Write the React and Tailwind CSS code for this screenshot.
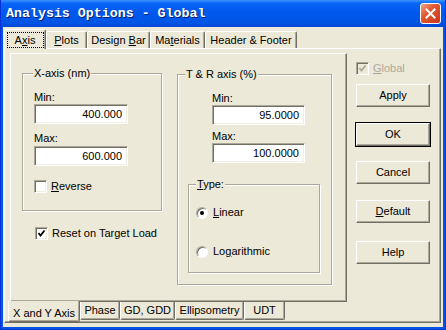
import React from "react";

const font = { fontFamily: '"Liberation Sans", Arial, sans-serif' };

const sunken =
  "border border-t-[#aca899] border-l-[#aca899] border-r-white border-b-white shadow-[inset_1px_1px_0_#716f64,inset_-1px_-1px_0_#f1efe2]";
const raised =
  "border border-t-white border-l-white border-r-[#716f64] border-b-[#716f64] shadow-[inset_-1px_-1px_0_#aca899]";
const etched =
  "border border-[#aca899] shadow-[1px_1px_0_white,inset_1px_1px_0_white]";

function U({ children }) {
  return <span className="underline underline-offset-[1px]">{children}</span>;
}

function Check({ checked, disabled }) {
  return (
    <div
      className={`w-[13px] h-[13px] flex items-center justify-center ${sunken} ${
        disabled ? "bg-[#ece9d8]" : "bg-white"
      }`}
    >
      {checked && (
        <svg width="9" height="9" viewBox="0 0 9 9">
          <path
            d="M1.5 4 L3.5 6.5 L7.5 1.5"
            fill="none"
            stroke={disabled ? "#aca899" : "#000"}
            strokeWidth="1.8"
          />
        </svg>
      )}
    </div>
  );
}

function Radio({ on }) {
  return (
    <div className="w-[12px] h-[12px] rounded-full bg-white border border-t-[#aca899] border-l-[#aca899] border-r-white border-b-white shadow-[inset_1px_1px_0_#716f64] flex items-center justify-center">
      {on && <div className="w-[4px] h-[4px] rounded-full bg-black" />}
    </div>
  );
}

function Field({ value, w }) {
  return (
    <div
      className={`${sunken} bg-white h-[20px] flex items-center justify-end pr-[5px] text-[11px] text-black`}
      style={{ width: w }}
    >
      {value}
    </div>
  );
}

function Btn({ children, def, className = "" }) {
  return (
    <div
      className={`w-[74px] h-[23px] ${
        def ? "outline outline-1 outline-black" : ""
      } ${className}`}
    >
      <div
        className={`w-full h-full ${raised} flex items-center justify-center text-[11px] text-black`}
      >
        {children}
      </div>
    </div>
  );
}

function Group({ label, left, className, children }) {
  return (
    <div className={`relative ${etched} ${className}`}>
      <div
        className="absolute -top-[7px] bg-[#ece9d8] px-[1px] leading-[13px] text-[11px] text-black"
        style={{ left }}
      >
        {label}
      </div>
      {children}
    </div>
  );
}

const topTab =
  "h-[17px] border-t border-l border-white border-r border-r-[#716f64] rounded-t-[2px] shadow-[inset_-1px_0_0_#aca899] flex items-center justify-center text-[11px]";
const bottomTab =
  "h-[18px] border-l border-white border-r border-r-[#716f64] border-b border-b-[#716f64] rounded-b-[2px] shadow-[inset_-1px_-1px_0_#aca899] flex items-center justify-center";

export default function App() {
  return (
    <div
      className="w-[446px] h-[330px] bg-[#0055e5] flex flex-col border-x border-b border-[#0831d9]"
      style={font}
    >
      {/* title bar */}
      <div className="h-[27px] shrink-0 flex items-center justify-between pl-[5px] pr-[4px] bg-[linear-gradient(to_bottom,#3d95ff_0%,#0a66f5_12%,#0058ee_45%,#0055e5_85%,#0046d3_100%)]">
        <div
          className="text-white font-bold text-[13.3px] [text-shadow:1px_1px_0_#0a1e6e] whitespace-pre"
          style={{ fontFamily: '"Liberation Mono", "Courier New", monospace' }}
        >
          Analysis Options - Global
        </div>
        <div className="w-[21px] h-[21px] rounded-[3px] border border-white bg-[linear-gradient(135deg,#f0a58a_0%,#e2582f_40%,#c7361a_100%)] flex items-center justify-center">
          <svg width="11" height="11" viewBox="0 0 11 11">
            <path d="M1.5 1.5 L9.5 9.5 M9.5 1.5 L1.5 9.5" stroke="#fff" strokeWidth="2" strokeLinecap="square" />
          </svg>
        </div>
      </div>

      {/* client area */}
      <div className="flex-1 mx-[2px] mb-[2px] bg-[#ece9d8] flex flex-col pl-[1px] pr-[2px] pb-[4px] text-black">
        {/* top tabs */}
        <div className="h-[21px] shrink-0 flex items-end">
          <div className="relative z-10 w-[42px] h-[20px] -mb-px bg-[#ece9d8] border-t border-l border-white border-r border-r-[#716f64] rounded-t-[2px] shadow-[inset_-1px_0_0_#aca899] flex items-start justify-center pt-[2px]">
            <div className="border border-dotted border-black w-[37px] h-[16px] flex items-center justify-center leading-[13px] text-[11px]">
              A<U>x</U>is
            </div>
          </div>
          <div className={`w-[41px] ${topTab}`}>
            <U>P</U>lots
          </div>
          <div className={`w-[63px] ${topTab}`}>
            Design&nbsp;<U>B</U>ar
          </div>
          <div className={`w-[55px] ${topTab}`}>
            Ma<U>t</U>erials
          </div>
          <div className={`w-[92px] ${topTab}`}>Header &amp; Footer</div>
        </div>

        {/* top tab page */}
        <div className={`flex-1 ${raised} flex`}>
          {/* inner tab control */}
          <div className="ml-[5px] mt-[4px] flex flex-col">
            <div className={`relative w-[337px] h-[249px] ${raised} flex items-start`}>
              {/* X axis column */}
              <div className="ml-[11px] mt-[19px] flex flex-col">
                <Group label="X-axis (nm)" left={10} className="w-[140px] h-[138px]">
                  <div className="pl-[11px] pt-[17px] flex flex-col text-[11px]">
                    <div className="leading-[13px]">Min:</div>
                    <Field value="400.000" w={94} />
                    <div className="leading-[13px] mt-[8px]">Max:</div>
                    <div className="mt-[1px]">
                      <Field value="600.000" w={94} />
                    </div>
                    <div className="mt-[14px] flex items-center gap-[4px] leading-[13px]">
                      <Check />
                      <span>
                        <U>R</U>everse
                      </span>
                    </div>
                  </div>
                </Group>
                <div className="mt-[16px] pl-[13px] flex items-center gap-[4px] text-[11px] leading-[13px]">
                  <Check checked />
                  <span>Reset on Target Load</span>
                </div>
              </div>

              {/* T & R column */}
              <Group label="T & R axis (%)" left={7} className="ml-[15px] mt-[20px] w-[155px] h-[211px]">
                <div className="pl-[34px] pt-[17px] flex flex-col text-[11px]">
                  <div className="leading-[13px]">Min:</div>
                  <Field value="95.0000" w={93} />
                  <div className="leading-[13px] mt-[5px]">Max:</div>
                  <Field value="100.0000" w={93} />
                </div>
                <Group
                  label={
                    <>
                      <U>T</U>ype:
                    </>
                  }
                  left={7}
                  className="ml-[10px] mt-[21px] w-[132px] h-[89px]"
                >
                  <div className="pl-[7px] pt-[21px] flex flex-col gap-[26px] text-[11px] leading-[13px]">
                    <div className="flex items-center gap-[5px]">
                      <Radio on />
                      <span>
                        <U>L</U>inear
                      </span>
                    </div>
                    <div className="flex items-center gap-[5px]">
                      <Radio />
                      <span>
                        Lo<U>g</U>arithmic
                      </span>
                    </div>
                  </div>
                </Group>
              </Group>
            </div>

            {/* bottom tabs */}
            <div className="flex items-start -ml-[2px] text-[11px]">
              <div className="relative z-10 -mt-px w-[72px] h-[21px] bg-[#ece9d8] border-l border-white border-r border-r-[#716f64] border-b border-b-[#716f64] rounded-b-[2px] shadow-[inset_-1px_-1px_0_#aca899] flex items-center justify-center pt-[4px]">
                X and Y Axis
              </div>
              <div className={`w-[40px] ${bottomTab}`}>Phase</div>
              <div className={`w-[55px] ${bottomTab}`}>GD, GDD</div>
              <div className={`w-[69px] ${bottomTab}`}>Ellipsometry</div>
              <div className={`w-[41px] ${bottomTab}`}>UDT</div>
            </div>
          </div>

          {/* right column */}
          <div className="ml-[9px] mt-[13px] flex flex-col">
            <div className="flex items-center gap-[4px] h-[13px] text-[11px] text-[#aca899]">
              <Check checked disabled />
              <span>
                <U>G</U>lobal
              </span>
            </div>
            <Btn className="mt-[9px]">Apply</Btn>
            <Btn className="mt-[16px]" def>
              OK
            </Btn>
            <Btn className="mt-[15px]">Cancel</Btn>
            <Btn className="mt-[16px]">
              <U>D</U>efault
            </Btn>
            <Btn className="mt-[18px]">Help</Btn>
          </div>
        </div>
      </div>
    </div>
  );
}
